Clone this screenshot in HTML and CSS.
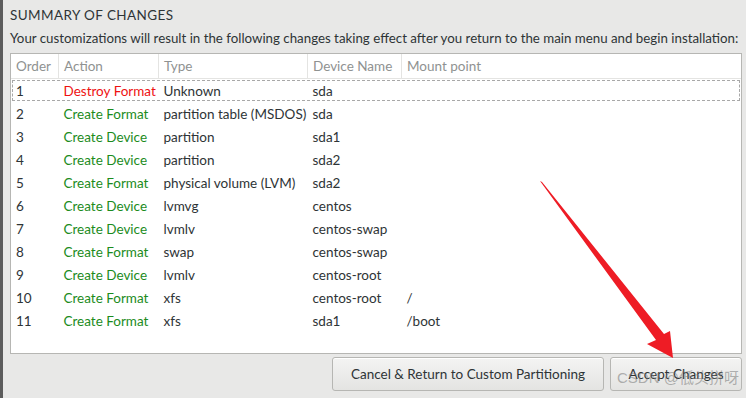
FILE: index.html
```html
<!DOCTYPE html>
<html lang="en">
<head>
    <meta charset="UTF-8">
    <title>Summary of Changes</title>
    <link rel="stylesheet" href="styles.css">
</head>
<body>
    <div class="dialog">
        <h4 class="title">SUMMARY OF CHANGES</h4>
        <p class="intro">Your customizations will result in the following changes taking effect after you return to the main menu and begin installation:</p>

        <!-- Changes list -->
        <div class="list">
            <table class="changes">
                <thead>
                    <tr>
                        <th class="c-order">Order</th>
                        <th class="c-action">Action</th>
                        <th class="c-type">Type</th>
                        <th class="c-device">Device Name</th>
                        <th class="c-mount">Mount point</th>
                    </tr>
                </thead>
                <tbody>
                    <tr class="focused"><td>1</td><td class="destroy">Destroy Format</td><td>Unknown</td><td>sda</td><td></td></tr>
                    <tr><td>2</td><td class="create">Create Format</td><td>partition table (MSDOS)</td><td>sda</td><td></td></tr>
                    <tr><td>3</td><td class="create">Create Device</td><td>partition</td><td>sda1</td><td></td></tr>
                    <tr><td>4</td><td class="create">Create Device</td><td>partition</td><td>sda2</td><td></td></tr>
                    <tr><td>5</td><td class="create">Create Format</td><td>physical volume (LVM)</td><td>sda2</td><td></td></tr>
                    <tr><td>6</td><td class="create">Create Device</td><td>lvmvg</td><td>centos</td><td></td></tr>
                    <tr><td>7</td><td class="create">Create Device</td><td>lvmlv</td><td>centos-swap</td><td></td></tr>
                    <tr><td>8</td><td class="create">Create Format</td><td>swap</td><td>centos-swap</td><td></td></tr>
                    <tr><td>9</td><td class="create">Create Device</td><td>lvmlv</td><td>centos-root</td><td></td></tr>
                    <tr><td>10</td><td class="create">Create Format</td><td>xfs</td><td>centos-root</td><td>/</td></tr>
                    <tr><td>11</td><td class="create">Create Format</td><td>xfs</td><td>sda1</td><td>/boot</td></tr>
                </tbody>
            </table>
        </div>

        <div class="actions">
            <button class="btn btn-cancel">Cancel &amp; Return to Custom Partitioning</button>
            <button class="btn btn-accept">Accept Changes</button>
        </div>
    </div>

    <!-- Red arrow annotation -->
    <svg class="arrow" width="746" height="398" viewBox="0 0 746 398">
        <polygon fill="#ee1c25" points="540,181 542,182 664,334 670,331 673,358 647,344 656,340"/>
    </svg>

    <div class="watermark">CSDN @低头拼呀</div>
</body>
</html>
```

FILE: styles.css
```css
body {
    margin: 0;
    width: 746px;
    height: 398px;
    overflow: hidden;
    background-color: #e8e8e7;
    font-family: "Lato", "DejaVu Sans", sans-serif;
    font-size: 13.5px;
    color: #2e3436;
}

.dialog {
    height: 398px;
    box-sizing: border-box;
    border-left: 3px solid #5c5c5c;
    padding: 6px 4px 0 7px;
    display: flex;
    flex-direction: column;
}

.title {
    margin: 0;
    font-size: 13.5px;
    font-weight: normal;
    line-height: 18px;
    letter-spacing: 0.4px;
}

.intro {
    margin: 5px 0 0 0;
    font-size: 13.3px;
    line-height: 18px;
    white-space: nowrap;
}

.list {
    margin-top: 6px;
    height: 301px;
    box-sizing: border-box;
    background-color: #fff;
    border: 1px solid #b6b6b3;
}

.changes {
    width: 100%;
    border-collapse: collapse;
    table-layout: fixed;
}

.changes th {
    height: 24px;
    padding: 0 0 0 5px;
    text-align: left;
    font-weight: normal;
    color: #8f9291;
    border-bottom: 1px solid #e4e4e2;
    border-right: 1px solid #e4e4e2;
}

.changes th.c-mount {
    border-right: none;
}

.c-order { width: 42px; }
.c-action { width: 94px; }
.c-type { width: 143px; }
.c-device { width: 88px; }

.changes td {
    height: 23px;
    padding: 0 0 0 5px;
    white-space: nowrap;
    color: #2e3436;
}

.changes tr.focused {
    outline: 1px dashed #a8a8a8;
    outline-offset: -2px;
}

.changes td.destroy {
    color: #ee1111;
}

.changes td.create {
    color: #1c8c1c;
}

.actions {
    display: flex;
    justify-content: flex-end;
    gap: 6px;
    margin-top: 3px;
}

.btn {
    height: 34px;
    padding: 0;
    font-family: inherit;
    font-size: 13.5px;
    color: #2e3436;
    background: linear-gradient(#f4f4f3, #e4e4e2);
    border: 1px solid #b6b6b3;
    border-radius: 3px;
    box-shadow: inset 0 1px 0 #fff;
}

.btn-cancel { width: 272px; }
.btn-accept { width: 132px; }

/* annotation overlays */
.arrow {
    position: absolute;
    top: 0;
    left: 0;
    pointer-events: none;
}

.watermark {
    position: absolute;
    left: 617px;
    top: 368px;
    font-size: 15px;
    line-height: 20px;
    color: rgba(120, 120, 120, 0.55);
    font-family: "Liberation Sans", "Noto Sans CJK SC", sans-serif;
}
```
